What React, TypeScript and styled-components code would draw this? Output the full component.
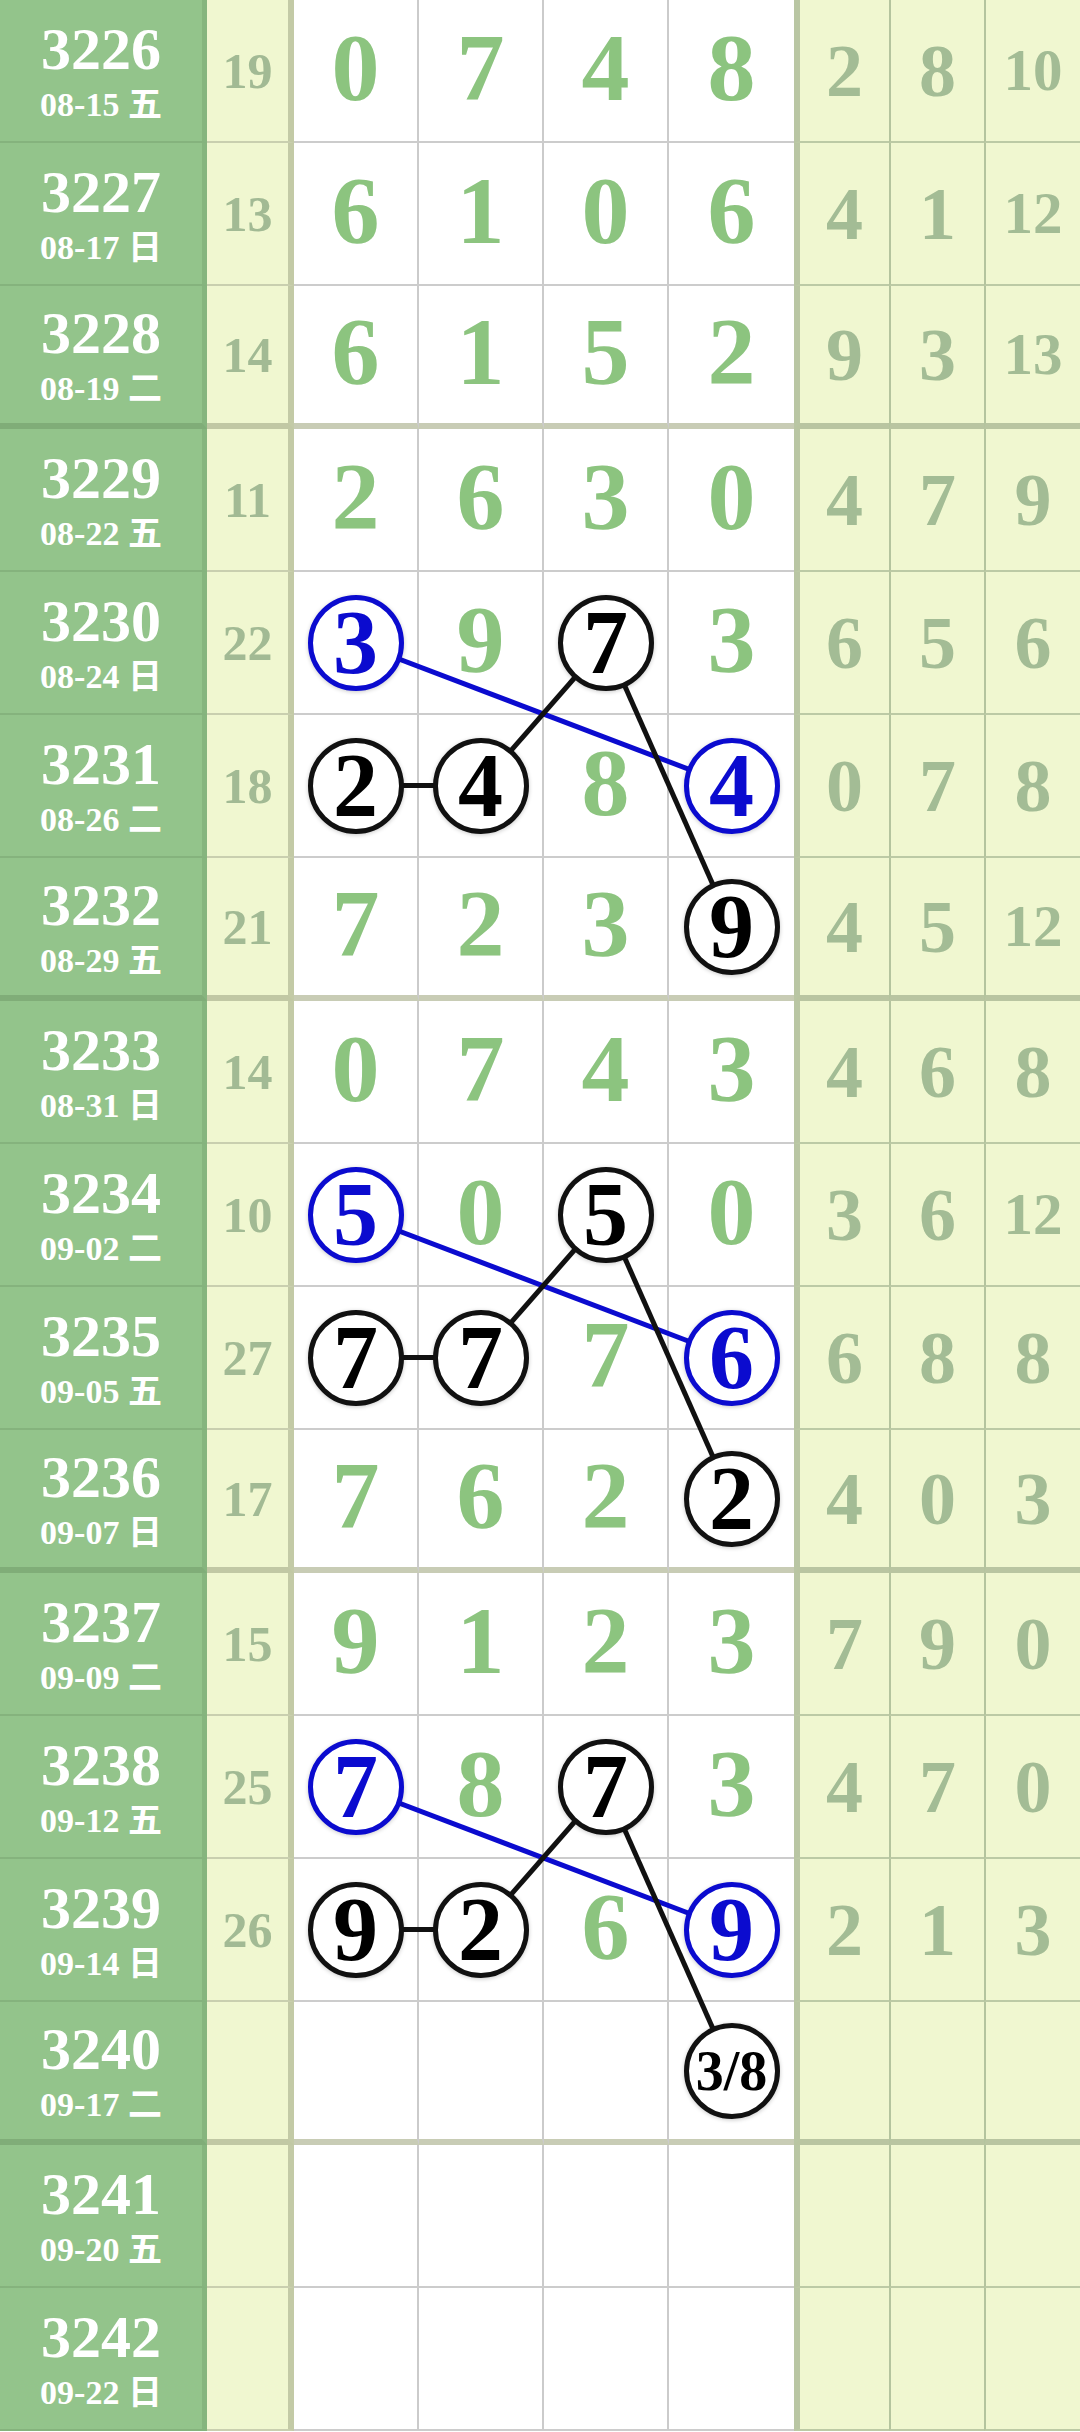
import React from 'react';
import styled, {createGlobalStyle} from 'styled-components';

const ROW_H = 143;
const SERIF = `"Liberation Serif", "Noto Sans CJK SC", serif`;

type Ball = {col: number; blue?: boolean; text?: string};
type Row = {issue: string; date: string; wd: string; sum: string; d: string[]; s: string[]; balls?: Ball[]};

const rows: Row[] = [
    {issue: '3226', date: '08-15', wd: '五', sum: '19', d: ['0', '7', '4', '8'], s: ['2', '8', '10']},
    {issue: '3227', date: '08-17', wd: '日', sum: '13', d: ['6', '1', '0', '6'], s: ['4', '1', '12']},
    {issue: '3228', date: '08-19', wd: '二', sum: '14', d: ['6', '1', '5', '2'], s: ['9', '3', '13']},
    {issue: '3229', date: '08-22', wd: '五', sum: '11', d: ['2', '6', '3', '0'], s: ['4', '7', '9']},
    {issue: '3230', date: '08-24', wd: '日', sum: '22', d: ['3', '9', '7', '3'], s: ['6', '5', '6'],
        balls: [{col: 0, blue: true}, {col: 2}]},
    {issue: '3231', date: '08-26', wd: '二', sum: '18', d: ['2', '4', '8', '4'], s: ['0', '7', '8'],
        balls: [{col: 0}, {col: 1}, {col: 3, blue: true}]},
    {issue: '3232', date: '08-29', wd: '五', sum: '21', d: ['7', '2', '3', '9'], s: ['4', '5', '12'],
        balls: [{col: 3}]},
    {issue: '3233', date: '08-31', wd: '日', sum: '14', d: ['0', '7', '4', '3'], s: ['4', '6', '8']},
    {issue: '3234', date: '09-02', wd: '二', sum: '10', d: ['5', '0', '5', '0'], s: ['3', '6', '12'],
        balls: [{col: 0, blue: true}, {col: 2}]},
    {issue: '3235', date: '09-05', wd: '五', sum: '27', d: ['7', '7', '7', '6'], s: ['6', '8', '8'],
        balls: [{col: 0}, {col: 1}, {col: 3, blue: true}]},
    {issue: '3236', date: '09-07', wd: '日', sum: '17', d: ['7', '6', '2', '2'], s: ['4', '0', '3'],
        balls: [{col: 3}]},
    {issue: '3237', date: '09-09', wd: '二', sum: '15', d: ['9', '1', '2', '3'], s: ['7', '9', '0']},
    {issue: '3238', date: '09-12', wd: '五', sum: '25', d: ['7', '8', '7', '3'], s: ['4', '7', '0'],
        balls: [{col: 0, blue: true}, {col: 2}]},
    {issue: '3239', date: '09-14', wd: '日', sum: '26', d: ['9', '2', '6', '9'], s: ['2', '1', '3'],
        balls: [{col: 0}, {col: 1}, {col: 3, blue: true}]},
    {issue: '3240', date: '09-17', wd: '二', sum: '', d: ['', '', '', ''], s: ['', '', ''],
        balls: [{col: 3, text: '3/8'}]},
    {issue: '3241', date: '09-20', wd: '五', sum: '', d: ['', '', '', ''], s: ['', '', '']},
    {issue: '3242', date: '09-22', wd: '日', sum: '', d: ['', '', '', ''], s: ['', '', '']},
];

// thick separator under these rows
const groupEnds = [2, 6, 10, 14];
const bottom = (r: number) => (groupEnds.includes(r) ? 6 : 2);

// centre of each digit column, and of a row's content box
const colX = [355.5, 480.5, 605.5, 731.5];
const rowY = (r: number) => ROW_H * r + (ROW_H - bottom(r)) / 2;

const links: {a: [number, number]; b: [number, number]; blue?: boolean}[] = [];
[4, 8, 12].forEach(g => {
    links.push({a: [g, 0], b: [g + 1, 3], blue: true});
    links.push({a: [g + 1, 0], b: [g + 1, 1]});
    links.push({a: [g + 1, 1], b: [g, 2]});
    links.push({a: [g, 2], b: [g + 2, 3]});
});

const GlobalStyle = createGlobalStyle`
  html, body {
    margin: 0;
    padding: 0;
    background: #fff;
  }
`;

export default function App() {
    return (
        <>
            <GlobalStyle/>
            <Chart>
                {rows.map((row, r) => {
                    const thick = groupEnds.includes(r);
                    return (
                        <React.Fragment key={row.issue}>
                            <IssueCell $thick={thick}>
                                <Issue>{row.issue}</Issue>
                                <DateText>{row.date} {row.wd}</DateText>
                            </IssueCell>
                            <SumCell $thick={thick}>{row.sum}</SumCell>
                            {row.d.map((v, c) => {
                                const ball = row.balls?.find(b => b.col === c);
                                return (
                                    <DigitCell key={c} $thick={thick} $last={c === 3}>
                                        {ball
                                            ? <Ball $blue={!!ball.blue} $small={!!ball.text}>{ball.text || v}</Ball>
                                            : v}
                                    </DigitCell>
                                );
                            })}
                            {row.s.map((v, c) => (
                                <SpanCell key={c} $thick={thick} $first={c === 0} $two={v.length > 1}>{v}</SpanCell>
                            ))}
                        </React.Fragment>
                    );
                })}
                <Links viewBox={`0 0 1080 ${ROW_H * rows.length}`}>
                    {links.map((l, i) => (
                        <line
                            key={i}
                            x1={colX[l.a[1]]} y1={rowY(l.a[0])}
                            x2={colX[l.b[1]]} y2={rowY(l.b[0])}
                            stroke={l.blue ? '#0b0bcf' : '#111'}
                            strokeWidth={5}
                        />
                    ))}
                </Links>
            </Chart>
        </>
    );
}

const Chart = styled.div`
position: relative;
width: 1080px;
display: grid;
grid-template-columns: 207px 87px 125px 125px 125px 125px 95px 95px 96px;
grid-auto-rows: ${ROW_H}px;
font-family: ${SERIF};
font-weight: 700;
`;

const Cell = styled.div<{$thick: boolean}>`
box-sizing: border-box;
display: flex;
align-items: center;
justify-content: center;
line-height: 1;
border-bottom-style: solid;
border-bottom-width: ${p => (p.$thick ? 6 : 2)}px;
`;

const IssueCell = styled(Cell)`
flex-direction: column;
background: #93c48b;
color: #fff;
border-right: 5px solid #86b57e;
border-bottom-color: ${p => (p.$thick ? '#80ad78' : '#85b37d')};
`;

const Issue = styled.div`
font-size: 60px;
line-height: 60px;
`;

const DateText = styled.div`
margin-top: 9px;
font-size: 34px;
line-height: 34px;
`;

const SumCell = styled(Cell)`
background: #f0f7d0;
color: #a2ba94;
font-size: 50px;
border-right: 6px solid #c3caa6;
border-bottom-color: ${p => (p.$thick ? '#c1c8a4' : '#c9cfaf')};
`;

const DigitCell = styled(Cell)<{$last: boolean}>`
background: #fff;
color: #8cc47f;
font-size: 96px;
padding-bottom: 6px;
border-right: ${p => (p.$last ? 'none' : '2px solid #cbcbcb')};
border-bottom-color: ${p => (p.$thick ? '#c8ccb5' : '#cccccc')};
`;

const SpanCell = styled(Cell)<{$first: boolean; $two: boolean}>`
background: #f0f7d0;
color: #a3bc95;
font-size: ${p => (p.$two ? 59 : 74)}px;
border-left: ${p => (p.$first ? '6px solid #b9c6a3' : '2px solid #b4c49e')};
border-bottom-color: ${p => (p.$thick ? '#b9c5a1' : '#bccaa5')};
`;

const Ball = styled.div<{$blue: boolean; $small: boolean}>`
position: relative;
z-index: 2;
box-sizing: border-box;
width: 96px;
height: 96px;
margin-top: 6px;
border-radius: 50%;
border: 5px solid ${p => (p.$blue ? '#0b0bcf' : '#111')};
background: #fff;
box-shadow: 0 1px 4px rgba(0, 0, 0, 0.22);
color: ${p => (p.$blue ? '#0b0bcf' : '#000')};
font-size: ${p => (p.$small ? 56 : 90)}px;
display: flex;
align-items: center;
justify-content: center;
`;

const Links = styled.svg`
position: absolute;
left: 0;
top: 0;
width: 1080px;
height: ${ROW_H * 17}px;
z-index: 1;
pointer-events: none;
`;
